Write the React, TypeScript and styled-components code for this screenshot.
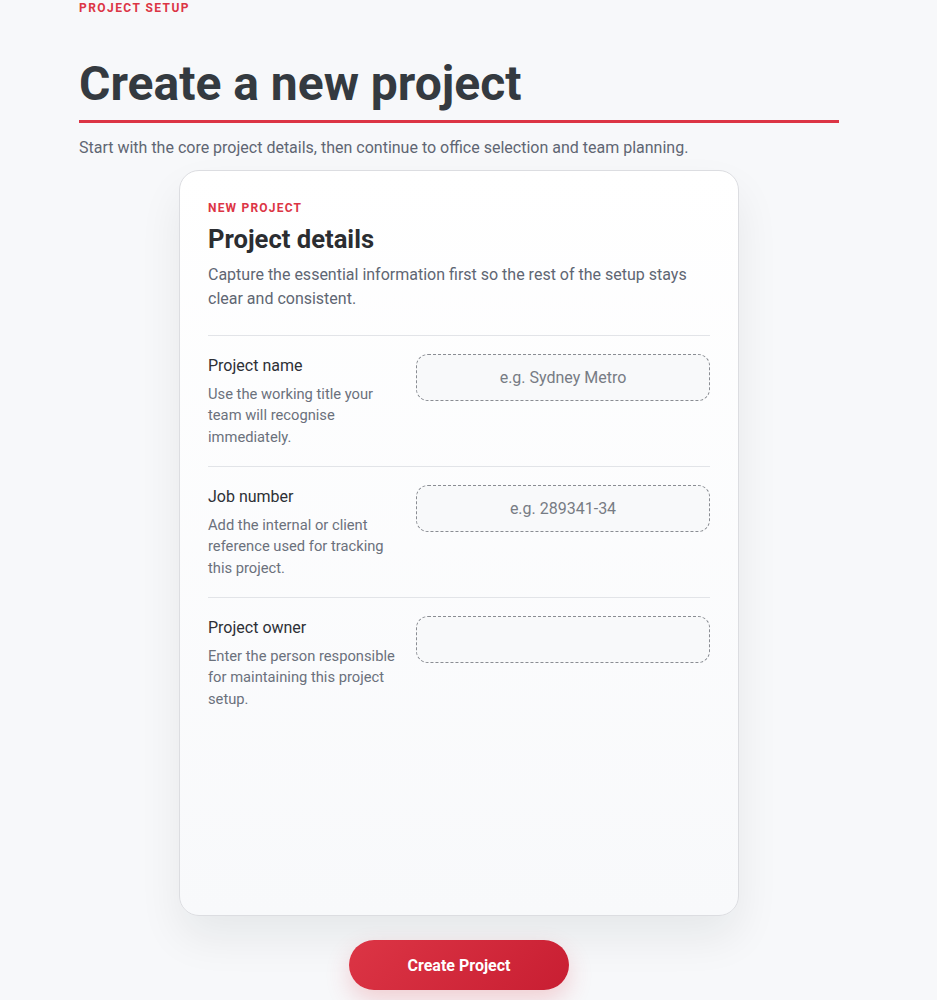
import React from "react";
import styled, { createGlobalStyle } from "styled-components";

const GlobalStyle = createGlobalStyle`
  html, body {
    margin: 0;
    padding: 0;
    background: #f7f8fa;
  }
  body {
    font-family: Roboto, "Liberation Sans", Arial, sans-serif;
    color: #343a40;
    -webkit-font-smoothing: antialiased;
  }
  * { box-sizing: border-box; }
`;

const Page = styled.div`
  width: 918px;
  min-height: 1000px;
  padding-bottom: 40px;
`;

const Container = styled.div`
  width: 760px;
  margin: 0 auto;
`;

const Header = styled.header`
  display: flex;
  flex-direction: column;
  padding-top: 1px;
`;

const Eyebrow = styled.div`
  font-size: 12px;
  line-height: 15px;
  font-weight: 700;
  letter-spacing: 0.12em;
  text-transform: uppercase;
  color: #dc3545;
`;

const Title = styled.h1`
  margin: 41px 0 0;
  padding-bottom: 10px;
  font-size: 48px;
  line-height: 53px;
  font-weight: 700;
  color: #343a40;
  border-bottom: 3px solid #dc3545;
`;

const Lead = styled.p`
  margin: 13px 0 0;
  font-size: 16px;
  line-height: 24px;
  color: #5f6673;
`;

const Card = styled.section`
  width: 560px;
  min-height: 746px;
  margin: 10px auto 0;
  padding: 28px;
  border: 1px solid #dcdde1;
  border-radius: 20px;
  background: linear-gradient(180deg, #ffffff 0%, #f8f9fb 100%);
  box-shadow: 0 22px 44px rgba(20, 24, 32, 0.07);
`;

const CardEyebrow = styled.div`
  font-size: 12px;
  line-height: 18px;
  font-weight: 700;
  letter-spacing: 0.1em;
  text-transform: uppercase;
  color: #dc3545;
`;

const CardTitle = styled.h2`
  margin: 7px 0 0;
  font-size: 25.6px;
  line-height: 30px;
  font-weight: 700;
  color: #2b2d31;
`;

const CardLead = styled.p`
  margin: 9px 0 24px;
  font-size: 16px;
  line-height: 24px;
  color: #5f6673;
`;

const Row = styled.div`
  display: grid;
  grid-template-columns: 192px 1fr;
  column-gap: 16px;
  align-items: start;
  padding: 18px 0;
  border-top: 1px solid #e2e4e8;
`;

const FieldText = styled.div`
  display: flex;
  flex-direction: column;
  gap: 6px;
`;

const Label = styled.label`
  font-size: 16px;
  line-height: 24px;
  color: #2d3036;
`;

const Hint = styled.p`
  margin: 0;
  font-size: 14.72px;
  line-height: 21.33px;
  color: #6b717c;
`;

const Input = styled.input`
  width: 100%;
  height: 47px;
  border: 1px dashed #8a8d93;
  border-radius: 12px;
  background: #f8f9fa;
  font-family: inherit;
  font-size: 16px;
  color: #343a40;
  text-align: center;
  outline: none;
  &::placeholder {
    color: #777c84;
  }
`;

const Actions = styled.div`
  display: flex;
  justify-content: center;
  margin-top: 24px;
`;

const PrimaryButton = styled.button`
  width: 220px;
  height: 50px;
  border: none;
  border-radius: 25px;
  background: linear-gradient(135deg, #dc3545 0%, #c81e32 100%);
  box-shadow: 0 10px 24px rgba(220, 53, 69, 0.22);
  color: #ffffff;
  font-family: inherit;
  font-size: 16px;
  font-weight: 700;
  cursor: pointer;
`;

const fields = [
  {
    id: "name",
    label: "Project name",
    hint: "Use the working title your team will recognise immediately.",
    placeholder: "e.g. Sydney Metro",
  },
  {
    id: "job",
    label: "Job number",
    hint: "Add the internal or client reference used for tracking this project.",
    placeholder: "e.g. 289341-34",
  },
  {
    id: "owner",
    label: "Project owner",
    hint: "Enter the person responsible for maintaining this project setup.",
    placeholder: "",
  },
];

export default function App() {
  return (
    <>
      <GlobalStyle />
      <Page>
        <Container>
          <Header>
            <Eyebrow>Project setup</Eyebrow>
            <Title>Create a new project</Title>
            <Lead>
              Start with the core project details, then continue to office selection and team planning.
            </Lead>
          </Header>
        </Container>
        <Card>
          <CardEyebrow>New project</CardEyebrow>
          <CardTitle>Project details</CardTitle>
          <CardLead>
            Capture the essential information first so the rest of the setup stays clear and consistent.
          </CardLead>
          {fields.map((f) => (
            <Row key={f.id}>
              <FieldText>
                <Label htmlFor={f.id}>{f.label}</Label>
                <Hint>{f.hint}</Hint>
              </FieldText>
              <Input id={f.id} placeholder={f.placeholder} />
            </Row>
          ))}
        </Card>
        <Actions>
          <PrimaryButton>Create Project</PrimaryButton>
        </Actions>
      </Page>
    </>
  );
}
